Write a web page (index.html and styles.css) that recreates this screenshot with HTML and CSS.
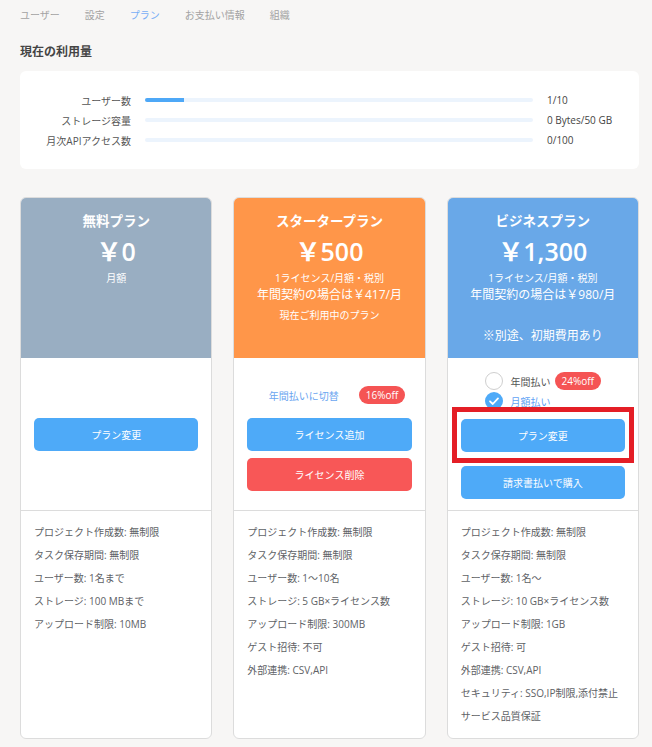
FILE: index.html
```html
<!DOCTYPE html>
<html lang="ja">
  <head>
    <meta charset="UTF-8" />
    <meta name="viewport" content="width=device-width, initial-scale=1.0" />
    <title>プラン</title>
    <link rel="stylesheet" href="styles.css">
  </head>
  <body>
    <div class="page">
      <nav class="tabs">
        <a href="#">ユーザー</a>
        <a href="#">設定</a>
        <a href="#" class="active">プラン</a>
        <a href="#">お支払い情報</a>
        <a href="#">組織</a>
      </nav>

      <h3 class="section-title">現在の利用量</h3>
      <div class="usage">
        <span class="usage-label">ユーザー数</span>
        <div class="bar"><div class="bar-fill" style="width: 10%"></div></div>
        <span class="usage-value">1/10</span>

        <span class="usage-label">ストレージ容量</span>
        <div class="bar"><div class="bar-fill" style="width: 0%"></div></div>
        <span class="usage-value">0 Bytes/50 GB</span>

        <span class="usage-label">月次APIアクセス数</span>
        <div class="bar"><div class="bar-fill" style="width: 0%"></div></div>
        <span class="usage-value">0/100</span>
      </div>

      <div class="plans">
        <!-- free -->
        <div class="plan">
          <div class="plan-head head-free">
            <div class="plan-name">無料プラン</div>
            <div class="plan-price">￥0</div>
            <div class="plan-note">月額</div>
          </div>
          <div class="plan-actions actions-free">
            <button class="btn">プラン変更</button>
          </div>
          <ul class="plan-features">
            <li>プロジェクト作成数: 無制限</li>
            <li>タスク保存期間: 無制限</li>
            <li>ユーザー数: 1名まで</li>
            <li>ストレージ: 100 MBまで</li>
            <li>アップロード制限: 10MB</li>
          </ul>
        </div>

        <!-- starter -->
        <div class="plan">
          <div class="plan-head head-starter">
            <div class="plan-name">スタータープラン</div>
            <div class="plan-price">￥500</div>
            <div class="plan-note">1ライセンス/月額・税別</div>
            <div class="plan-annual">年間契約の場合は￥417/月</div>
            <div class="plan-current">現在ご利用中のプラン</div>
          </div>
          <div class="plan-actions">
            <div class="switch-row">
              <a href="#" class="switch-link">年間払いに切替</a>
              <span class="badge">16%off</span>
            </div>
            <button class="btn">ライセンス追加</button>
            <button class="btn btn-danger">ライセンス削除</button>
          </div>
          <ul class="plan-features">
            <li>プロジェクト作成数: 無制限</li>
            <li>タスク保存期間: 無制限</li>
            <li>ユーザー数: 1〜10名</li>
            <li>ストレージ: 5 GB×ライセンス数</li>
            <li>アップロード制限: 300MB</li>
            <li>ゲスト招待: 不可</li>
            <li>外部連携: CSV,API</li>
          </ul>
        </div>

        <!-- business -->
        <div class="plan">
          <div class="plan-head head-business">
            <div class="plan-name">ビジネスプラン</div>
            <div class="plan-price">￥1,300</div>
            <div class="plan-note">1ライセンス/月額・税別</div>
            <div class="plan-annual">年間契約の場合は￥980/月</div>
            <div class="plan-extra">※別途、初期費用あり</div>
          </div>
          <div class="plan-actions">
            <div class="radios">
              <label class="radio">
                <span class="radio-circle"></span>
                <span>年間払い</span>
                <span class="badge">24%off</span>
              </label>
              <label class="radio checked">
                <svg class="radio-check" width="18" height="18" viewBox="0 0 18 18">
                  <circle cx="9" cy="9" r="9" fill="#4eaaf8" />
                  <path d="M5 9.3 L7.8 12 L13 6.4" fill="none" stroke="#fff" stroke-width="1.8" stroke-linecap="round" stroke-linejoin="round" />
                </svg>
                <span>月額払い</span>
              </label>
            </div>
            <div class="highlight">
              <button class="btn">プラン変更</button>
            </div>
            <button class="btn btn-invoice">請求書払いで購入</button>
          </div>
          <ul class="plan-features">
            <li>プロジェクト作成数: 無制限</li>
            <li>タスク保存期間: 無制限</li>
            <li>ユーザー数: 1名〜</li>
            <li>ストレージ: 10 GB×ライセンス数</li>
            <li>アップロード制限: 1GB</li>
            <li>ゲスト招待: 可</li>
            <li>外部連携: CSV,API</li>
            <li>セキュリティ: SSO,IP制限,添付禁止</li>
            <li>サービス品質保証</li>
          </ul>
        </div>
      </div>
    </div>
  </body>
</html>
```

FILE: styles.css
```css
body {
  margin: 0;
  background-color: #f7f6f5;
  font-family: "Open Sans", "Noto Sans CJK JP", sans-serif;
  color: #606266;
}
.page {
  width: 619px;
  margin-left: 20px;
}
.tabs {
  display: flex;
  gap: 25px;
  height: 30px;
  line-height: 30px;
  font-size: 10px;
}
.tabs a {
  color: #a3a3a3;
  text-decoration: none;
}
.tabs a.active {
  color: #78aef5;
}
.section-title {
  margin: 13px 0 10px;
  font-size: 12px;
  line-height: 18px;
  font-weight: bold;
  color: #444;
}
.usage {
  display: grid;
  grid-template-columns: 111px 1fr 92px;
  column-gap: 14px;
  grid-auto-rows: 20px;
  align-items: center;
  padding: 19px 0;
  background: white;
  border-radius: 6px;
  font-size: 10px;
}
.usage-label {
  text-align: right;
  color: #555;
}
.usage-value {
  color: #444;
}
.bar {
  height: 4px;
  background: #ecf4fd;
  border-radius: 2px;
  overflow: hidden;
}
.bar-fill {
  height: 100%;
  background: #4ea8f7;
}
.plans {
  display: grid;
  grid-template-columns: repeat(3, 1fr);
  gap: 21px;
  margin-top: 28px;
}
.plan {
  background: white;
  border: 1px solid #dcdcdc;
  border-radius: 6px;
  overflow: hidden;
}
.plan-head {
  height: 160px;
  box-sizing: border-box;
  padding-top: 13px;
  text-align: center;
  color: white;
}
.head-free {
  background: #99aec2;
}
.head-starter {
  background: #ff9649;
}
.head-business {
  background: #69a8e8;
}
.plan-name {
  font-size: 13.5px;
  font-weight: bold;
  line-height: 20px;
  margin-bottom: 3px;
}
.plan-price {
  font-size: 25px;
  font-weight: 600;
  line-height: 34px;
  margin-bottom: 2px;
}
.plan-note {
  font-size: 10px;
  line-height: 16px;
}
.plan-annual {
  font-size: 12px;
  line-height: 18px;
}
.plan-current {
  font-size: 10px;
  line-height: 16px;
  margin-top: 3px;
}
.plan-extra {
  font-size: 12px;
  line-height: 18px;
  margin-top: 23px;
}
.plan-actions {
  height: 152px;
  box-sizing: border-box;
  padding: 28px 13px 0;
  display: flex;
  flex-direction: column;
  gap: 7px;
}
.actions-free {
  padding-top: 60px;
}
.btn {
  width: 100%;
  height: 33px;
  border: none;
  border-radius: 5px;
  background: #4eaaf8;
  color: white;
  font-family: inherit;
  font-size: 10px;
  cursor: pointer;
}
.btn-danger {
  background: #f85757;
}
.btn-invoice {
  margin-top: 7px;
}
.switch-row {
  display: flex;
  justify-content: center;
  align-items: center;
  gap: 20px;
  height: 18px;
  margin-bottom: 7px;
  padding-left: 15px;
  font-size: 10px;
}
.switch-link {
  color: #6aa5f0;
  text-decoration: none;
}
.badge {
  display: inline-block;
  height: 18px;
  line-height: 18px;
  padding: 0 7px;
  border-radius: 9px;
  background: #f55454;
  color: white;
  font-size: 10px;
}
.radios {
  align-self: center;
  display: flex;
  flex-direction: column;
  gap: 2px;
  margin-top: -14px;
  margin-bottom: 2px;
  font-size: 10px;
}
.radio {
  display: flex;
  align-items: center;
  gap: 8px;
  height: 18px;
  color: #555;
}
.radio .badge {
  margin-left: -4px;
}
.radio.checked {
  color: #5fa3f5;
}
.radio-circle {
  width: 16px;
  height: 16px;
  border: 1px solid #cfcfcf;
  border-radius: 50%;
  background: white;
}
.highlight {
  position: relative;
}
.highlight::after {
  content: "";
  position: absolute;
  top: -12px;
  bottom: -11px;
  left: -9px;
  right: -9px;
  border: 5px solid #e41e26;
  pointer-events: none;
}
.plan-features {
  list-style: none;
  margin: 0;
  padding: 10px 13px;
  border-top: 1px solid #dcdcdc;
  font-size: 10px;
  line-height: 23px;
}
```
